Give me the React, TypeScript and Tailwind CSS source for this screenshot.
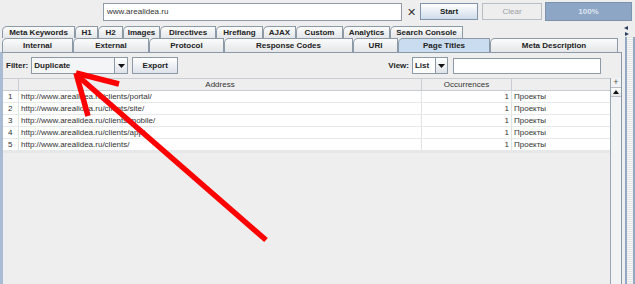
import React from 'react';

const row1 = [
  {label: 'Meta Keywords', w: 73},
  {label: 'H1', w: 23},
  {label: 'H2', w: 25},
  {label: 'Images', w: 37},
  {label: 'Directives', w: 56},
  {label: 'Hreflang', w: 47},
  {label: 'AJAX', w: 33},
  {label: 'Custom', w: 47},
  {label: 'Analytics', w: 47},
  {label: 'Search Console', w: 73},
];

const row2 = [
  {label: 'Internal', w: 71},
  {label: 'External', w: 76},
  {label: 'Protocol', w: 75},
  {label: 'Response Codes', w: 129},
  {label: 'URI', w: 45},
  {label: 'Page Titles', w: 92, selected: true},
  {label: 'Meta Description', w: 128},
];

const urls = [
  'http://www.arealidea.ru/clients/portal/',
  'http://www.arealidea.ru/clients/site/',
  'http://www.arealidea.ru/clients/mobile/',
  'http://www.arealidea.ru/clients/app/',
  'http://www.arealidea.ru/clients/',
];

const Tab = ({label, w, selected}: {label: string; w: number; selected?: boolean}) => (
  <div
    style={{width: w}}
    className={`flex h-full shrink-0 items-center justify-center rounded-tl-[5px] border border-b-0 border-[#8c99a6] text-[8px] font-bold text-[#222] ${
      selected ? 'bg-[#c9dcf0]' : 'bg-gradient-to-b from-[#fbfbfb] to-[#e4e6e9]'
    }`}
  >
    {label}
  </div>
);

const ArrowDown = () => (
  <svg width="7" height="4" viewBox="0 0 7 4">
    <path d="M0 0H7L3.5 4Z" fill="#111" />
  </svg>
);

export default function App() {
  return (
    <div className="relative h-[284px] w-[635px] overflow-hidden bg-[#eeeeee] font-['Liberation_Sans',Arial,sans-serif] text-[#222]">
      {/* top bar */}
      <div className="flex h-[25px] items-start pt-[3px]">
        <div className="ml-[103px] flex h-[18px] w-[299px] items-center border border-[#8f9ba8] bg-white pl-[3px] text-[8px] text-[#333]">
          www.arealidea.ru
        </div>
        <div className="flex h-[18px] w-[18px] items-center justify-center text-[11px] font-light text-[#333]">✕</div>
        <div className="flex h-[17px] w-[58px] items-center justify-center border border-[#7f93ab] bg-gradient-to-b from-white to-[#cfdcea] text-[8px] font-bold">
          Start
        </div>
        <div className="ml-[4px] flex h-[17px] w-[60px] items-center justify-center border border-[#b8bec6] bg-[#eeeeee] text-[8px] text-[#9aa0a6]">
          Clear
        </div>
        <div className="ml-[3px] mt-[-1px] flex h-[19px] w-[87px] items-center justify-center border border-[#7d93ad] bg-[#8ea6c6] text-[8px] font-bold text-[#dde5ef]">
          100%
        </div>
      </div>

      <div className="flex">
        {/* tabbed pane */}
        <div className="flex w-[622px] flex-col">
          <div className="flex h-[13px] pl-[2px] pt-[1px]">
            {row1.map((t) => (
              <Tab key={t.label} {...t} />
            ))}
          </div>
          <div className="flex h-[14px] pl-[2px]">
            {row2.map((t) => (
              <Tab key={t.label} {...t} />
            ))}
          </div>
          <div className="flex h-[232px] flex-col border-l-[3px] border-t border-r border-l-[#a9bcd3] border-t-[#8c99a6] border-r-[#8c99a6]">
            {/* toolbar */}
            <div className="flex h-[25px] items-center">
              <span className="ml-[3px] text-[8px] font-bold">Filter:</span>
              <div className="ml-[3px] flex h-[17px] w-[97px] border border-[#8c99a6] bg-[#f4f5f7]">
                <div className="flex flex-1 items-center pl-[2px] text-[8px] font-bold">Duplicate</div>
                <div className="flex w-[13px] items-center justify-center border-l border-[#8c99a6] bg-gradient-to-b from-white to-[#dfe3e8]">
                  <ArrowDown />
                </div>
              </div>
              <div className="ml-[4px] flex h-[17px] w-[46px] items-center justify-center border border-[#8c99a6] bg-gradient-to-b from-white to-[#dde3ea] text-[8px] font-bold">
                Export
              </div>
              <span className="ml-[210px] text-[8px] font-bold">View:</span>
              <div className="ml-[3px] flex h-[17px] w-[36px] border border-[#8c99a6] bg-white">
                <div className="flex flex-1 items-center pl-[2px] text-[8px] font-bold">List</div>
                <div className="flex w-[12px] items-center justify-center border-l border-[#8c99a6] bg-gradient-to-b from-white to-[#dfe3e8]">
                  <ArrowDown />
                </div>
              </div>
              <div className="ml-[5px] h-[16px] w-[148px] border border-[#8c99a6] bg-white" />
            </div>

            {/* table */}
            <div className="flex flex-1">
              <div className="flex w-[607px] flex-col">
                <div className="grid h-[13px] grid-cols-[16px_403px_90px_98px] border-y border-[#c9cdd2] bg-[#eeeeee] text-[8px] text-[#333]">
                  <div className="border-r border-[#c9cdd2]" />
                  <div className="flex items-center justify-center border-r border-[#c9cdd2]">Address</div>
                  <div className="flex items-center justify-center border-r border-[#c9cdd2]">Occurrences</div>
                  <div />
                </div>
                {urls.map((u, i) => (
                  <div
                    key={u}
                    className="grid h-[12px] grid-cols-[16px_403px_90px_98px] border-b border-[#e6e8ea] bg-white text-[8px] leading-[11px] text-[#333]"
                  >
                    <div className="flex items-center border-r border-[#e0e2e4] pl-[5px]">{i + 1}</div>
                    <div className="flex items-center border-r border-[#e0e2e4] pl-[2px]">{u}</div>
                    <div className="flex items-center justify-end border-r border-[#e0e2e4] pr-[2px]">1</div>
                    <div className="flex items-center pl-[2px]">Проекты</div>
                  </div>
                ))}
                <div className="h-[2px] bg-[#e6e7e9]" />
              </div>
              {/* vertical scrollbar */}
              <div className="flex w-[11px] flex-col border-l border-[#9aa6b2] bg-[#f2f3f4]">
                <div className="flex h-[10px] items-center justify-center border-b border-[#b7bec6] text-[9px] leading-none text-[#555]">
                  +
                </div>
                <div className="flex h-[9px] items-center justify-center border-b border-[#b7bec6] bg-gradient-to-b from-white to-[#e3e6ea]">
                  <svg width="6" height="4" viewBox="0 0 6 4">
                    <path d="M0 4H6L3 0Z" fill="#111" />
                  </svg>
                </div>
                <div className="flex-1" />
              </div>
            </div>
          </div>
        </div>

        {/* right split strip */}
        <div className="relative flex w-[13px] flex-col">
          <div className="flex h-[12px] flex-col items-start pl-[2px] pt-[1px]">
            <svg width="5" height="10" viewBox="0 0 5 10">
              <path d="M4 0V4L0 2Z" fill="#2c3e5e" />
              <path d="M1 6V10L5 8Z" fill="#2c3e5e" />
            </svg>
          </div>
          <div className="ml-[3px] flex flex-1 border-l-2 border-r-2 border-[#93a8c2] bg-[repeating-linear-gradient(0deg,#e6e6e6_0px,#e6e6e6_1px,#f6f6f6_1px,#f6f6f6_2px)]" />
        </div>
      </div>

      {/* red annotation arrow */}
      <svg className="pointer-events-none absolute left-0 top-0" width="635" height="284" viewBox="0 0 635 284">
        <g stroke="#ff0000" strokeWidth="5.5" strokeLinecap="butt" fill="none">
          <line x1="79" y1="77" x2="266" y2="240" />
          <line x1="76" y1="73" x2="119" y2="84" />
          <line x1="76" y1="73" x2="88" y2="116" />
        </g>
      </svg>
    </div>
  );
}
